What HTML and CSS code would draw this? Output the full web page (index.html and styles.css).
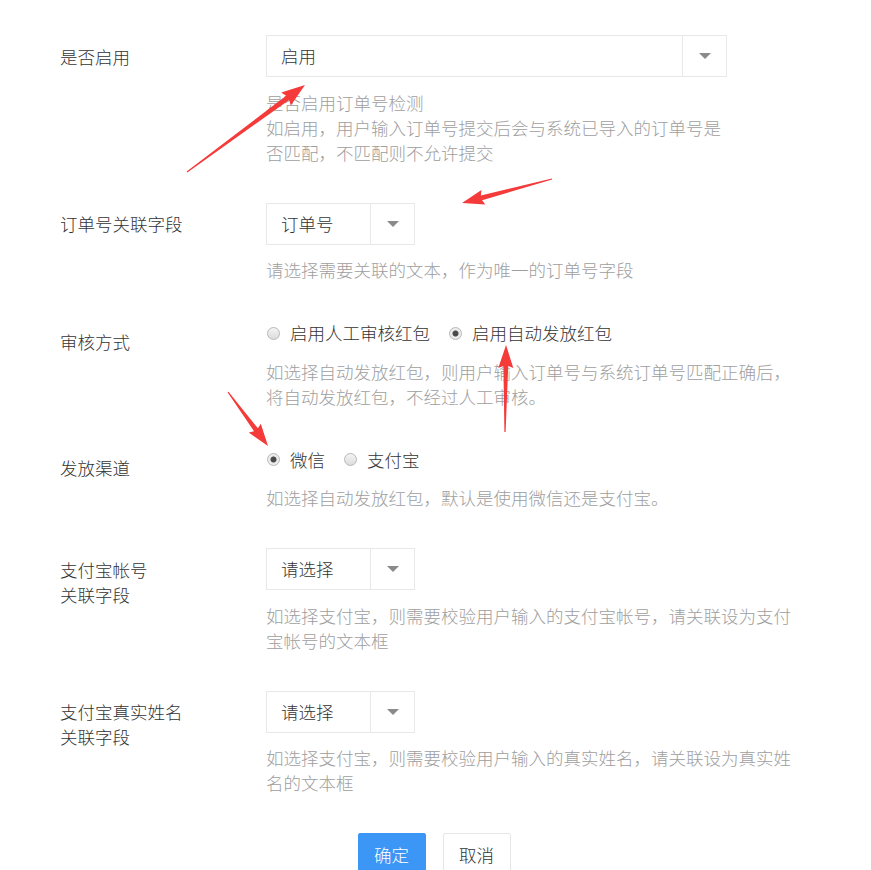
FILE: index.html
```html
<!DOCTYPE html>
<html lang="zh-CN">
<head>
<meta charset="utf-8">
<title>订单号检测设置</title>
<link rel="stylesheet" href="styles.css">
</head>
<body>
<div class="page">
  <form class="form">
    <div class="row">
      <div class="label">是否启用</div>
      <div class="field">
        <div class="select wide">
          <span class="select-value">启用</span>
          <span class="select-caret"><i class="caret"></i></span>
        </div>
        <div class="help">是否启用订单号检测<br>如启用，用户输入订单号提交后会与系统已导入的订单号是<br>否匹配，不匹配则不允许提交</div>
      </div>
    </div>

    <div class="row">
      <div class="label">订单号关联字段</div>
      <div class="field">
        <div class="select narrow">
          <span class="select-value">订单号</span>
          <span class="select-caret"><i class="caret"></i></span>
        </div>
        <div class="help">请选择需要关联的文本，作为唯一的订单号字段</div>
      </div>
    </div>

    <div class="row">
      <div class="label">审核方式</div>
      <div class="field">
        <div class="radios">
          <label class="radio"><span class="radio-dot"></span>启用人工审核红包</label>
          <label class="radio"><span class="radio-dot checked"></span>启用自动发放红包</label>
        </div>
        <div class="help">如选择自动发放红包，则用户输入订单号与系统订单号匹配正确后，<br>将自动发放红包，不经过人工审核。</div>
      </div>
    </div>

    <div class="row">
      <div class="label">发放渠道</div>
      <div class="field">
        <div class="radios">
          <label class="radio"><span class="radio-dot checked"></span>微信</label>
          <label class="radio"><span class="radio-dot"></span>支付宝</label>
        </div>
        <div class="help">如选择自动发放红包，默认是使用微信还是支付宝。</div>
      </div>
    </div>

    <div class="row">
      <div class="label">支付宝帐号<br>关联字段</div>
      <div class="field">
        <div class="select narrow">
          <span class="select-value">请选择</span>
          <span class="select-caret"><i class="caret"></i></span>
        </div>
        <div class="help">如选择支付宝，则需要校验用户输入的支付宝帐号，请关联设为支付<br>宝帐号的文本框</div>
      </div>
    </div>

    <div class="row">
      <div class="label">支付宝真实姓名<br>关联字段</div>
      <div class="field">
        <div class="select narrow">
          <span class="select-value">请选择</span>
          <span class="select-caret"><i class="caret"></i></span>
        </div>
        <div class="help">如选择支付宝，则需要校验用户输入的真实姓名，请关联设为真实姓<br>名的文本框</div>
      </div>
    </div>

    <div class="actions">
      <button type="button" class="btn btn-primary">确定</button>
      <button type="button" class="btn">取消</button>
    </div>
  </form>

  <svg class="annotations" width="871" height="870" viewBox="0 0 871 870" aria-hidden="true">
    <g fill="#f53a3a">
      <polygon transform="translate(187 172) rotate(-36.4)" points="0,-0.6 125,-2.6 123,-8 146.6,0 123,8 125,2.6 0,0.6"/>
      <polygon transform="translate(552 179) rotate(165.07)" points="0,-0.6 73,-2.4 71,-7.5 93.1,0 71,7.5 73,2.4 0,0.6"/>
      <polygon transform="translate(505 432) rotate(-89.3)" points="0,-0.6 66,-2.4 64,-7.5 87,0 64,7.5 66,2.4 0,0.6"/>
      <polygon transform="translate(228 392) rotate(53.47)" points="0,-0.6 47,-2.4 45,-7.5 67.2,0 45,7.5 47,2.4 0,0.6"/>
    </g>
  </svg>
</div>
</body>
</html>
```

FILE: styles.css
```css
html, body {
  margin: 0;
  padding: 0;
  background: #ffffff;
}

body {
  font-family: "Noto Sans CJK SC", "Noto Sans", sans-serif;
  font-size: 17.5px;
  font-weight: 300;
  color: #333333;
}

.page {
  position: relative;
  width: 871px;
  height: 870px;
  overflow: hidden;
}

.form {
  padding: 35px 0 0 60px;
}

.row {
  display: grid;
  grid-template-columns: 206px 1fr;
  margin-bottom: 38px;
}

.label {
  padding-top: 8.5px;
  line-height: 25px;
  color: #333333;
}

.field {
  display: flex;
  flex-direction: column;
  align-items: flex-start;
}

.select {
  display: flex;
  height: 42px;
  box-sizing: border-box;
  border: 1px solid #e8e8e8;
  background: #ffffff;
}

.select.wide {
  width: 461px;
}

.select.narrow {
  width: 149px;
}

.select-value {
  flex: 1;
  padding-left: 14px;
  line-height: 40px;
  color: #333333;
}

.select-caret {
  width: 43px;
  border-left: 1px solid #e8e8e8;
  display: flex;
  align-items: center;
  justify-content: center;
}

.caret {
  width: 0;
  height: 0;
  border-left: 6px solid transparent;
  border-right: 6px solid transparent;
  border-top: 6px solid #8a8a8a;
}

.help {
  margin-top: 12.5px;
  line-height: 25px;
  color: #9e9e9e;
  white-space: nowrap;
}

.radios {
  display: flex;
  align-items: center;
  height: 26px;
}

.radio {
  display: inline-flex;
  align-items: center;
  margin-right: 18px;
  margin-left: 0.5px;
  color: #333333;
  line-height: 26px;
}

.radio-dot {
  width: 13px;
  height: 13px;
  box-sizing: border-box;
  border-radius: 50%;
  border: 1px solid #b8b8b8;
  background: linear-gradient(#f4f4f4, #dcdcdc);
  margin-right: 10.5px;
  position: relative;
}

.radio-dot.checked {
  background: radial-gradient(circle, #4a4a4a 0, #4a4a4a 2.6px, #e9e9e9 3.4px, #f1f1f1 100%);
}

.actions {
  display: flex;
  justify-content: center;
  gap: 17px;
  padding-right: 63px;
}

.btn {
  width: 68px;
  height: 42px;
  box-sizing: border-box;
  border: 1px solid #e6e6e6;
  border-radius: 2px;
  background: #ffffff;
  color: #333333;
  font-family: inherit;
  font-size: 17.5px;
  font-weight: 300;
  padding: 0;
  cursor: pointer;
}

.btn-primary {
  background: #3b96f6;
  border-color: #3b96f6;
  color: #ffffff;
}

.annotations {
  position: absolute;
  left: 0;
  top: 0;
  pointer-events: none;
}
```
